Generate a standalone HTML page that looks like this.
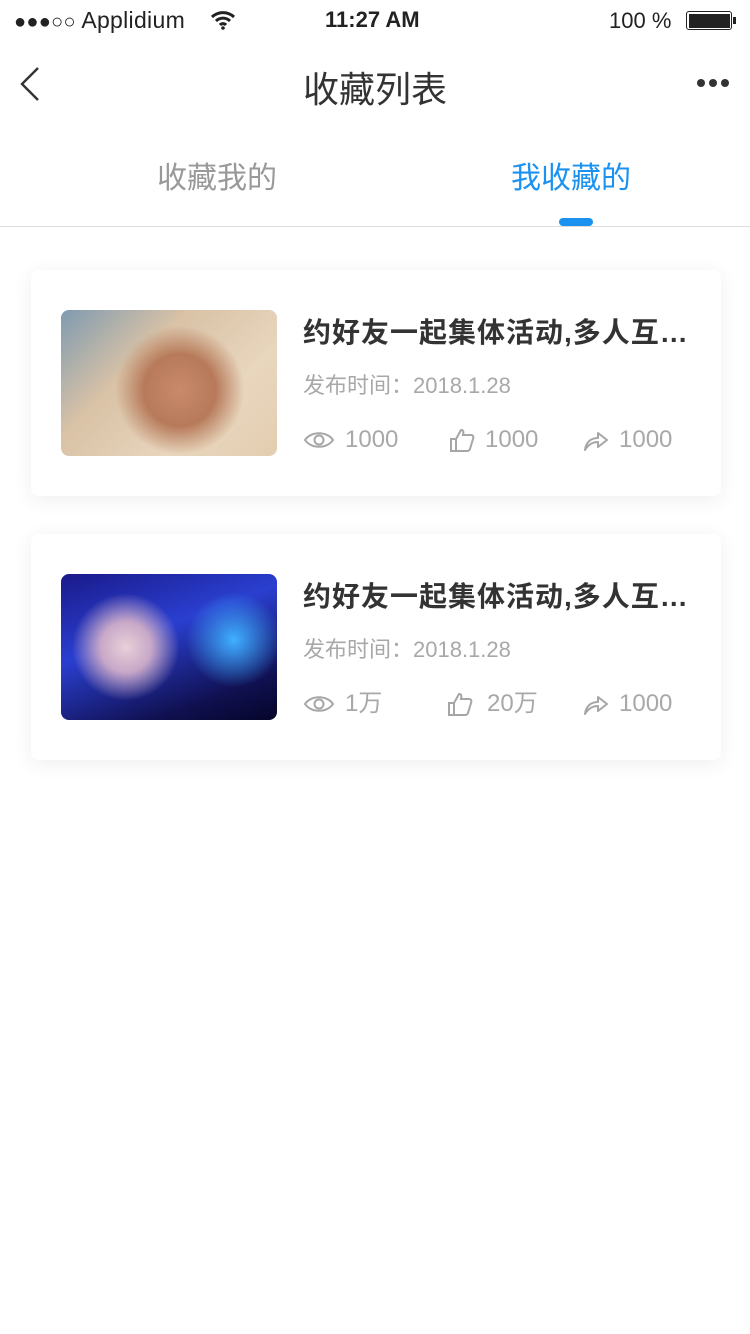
<!DOCTYPE html>
<html><head><meta charset="utf-8"><style>
*{margin:0;padding:0;box-sizing:border-box}
body{width:750px;height:1334px;background:#fff;font-family:"Liberation Sans","Noto Sans CJK SC",sans-serif;position:relative;overflow:hidden;color:#333}
.abs{position:absolute}
.card{position:absolute;left:31px;width:690px;height:226px;background:#fff;border-radius:8px;box-shadow:0 4px 20px rgba(0,0,0,0.07)}
.img{position:absolute;left:30px;top:40px;width:216px;height:146px;border-radius:8px;overflow:hidden}
.title{position:absolute;left:272px;top:43px;font-size:28px;line-height:40px;font-weight:bold;color:#333;white-space:nowrap;letter-spacing:1px}
.date{position:absolute;left:272px;top:98px;font-size:22px;color:#a8a8a8}
.stat{position:absolute;top:154px;height:32px;line-height:32px;font-size:24px;color:#a8a8a8;display:flex;align-items:center}
.stat svg{margin-right:10px}
</style></head><body>
<div class="abs" style="left:14px;top:7px;font-size:23px;color:#222;letter-spacing:0.3px"><span style="font-size:20px">●●●○○</span> Applidium</div>
<svg class="abs" style="left:210px;top:10px" width="26" height="20" viewBox="0 0 26 20"><path d="M2 7a16 16 0 0 1 22 0M6 11a10 10 0 0 1 14 0M10 15a4 4 0 0 1 6 0" stroke="#222" stroke-width="3" fill="none"/><circle cx="13" cy="18" r="1.8" fill="#222"/></svg>
<div class="abs" style="left:325px;top:7px;font-size:22px;font-weight:bold;color:#222">11:27 AM</div>
<div class="abs" style="left:609px;top:8px;font-size:22px;color:#222">100 %</div>
<div class="abs" style="left:686px;top:11px;width:46px;height:19px;border:1.5px solid #222;border-radius:3px;padding:1.5px"><div style="width:100%;height:100%;background:#222"></div></div>
<div class="abs" style="left:733px;top:17px;width:3px;height:7px;background:#222"></div>
<svg class="abs" style="left:18px;top:66px" width="24" height="36"><path d="M20 2L4 18l16 16" stroke="#333" stroke-width="2.4" fill="none"/></svg>
<div class="abs" style="left:0;width:750px;top:61px;text-align:center;font-size:36px;color:#333">收藏列表</div>
<div class="abs" style="left:697px;top:79px;display:flex;gap:4px"><i style="width:8px;height:8px;border-radius:50%;background:#333"></i><i style="width:8px;height:8px;border-radius:50%;background:#333"></i><i style="width:8px;height:8px;border-radius:50%;background:#333"></i></div>
<div class="abs" style="left:157px;top:153px;font-size:30px;color:#999">收藏我的</div>
<div class="abs" style="left:511px;top:153px;font-size:30px;color:#1b92f0">我收藏的</div>
<div class="abs" style="left:559px;top:218px;width:34px;height:8px;border-radius:4px;background:#1b92f0"></div>
<div class="abs" style="left:0;top:226px;width:750px;height:1px;background:#ddd"></div>

<div class="card" style="top:270px">
<div class="img" style="background:radial-gradient(circle at 55% 55%,#c88a6a 0,#b77a5a 25%,transparent 45%),linear-gradient(135deg,#7f9bb0 0,#d9c2a6 35%,#e8d6bd 70%,#e3cdb0 100%)"></div>
<div class="title">约好友一起集体活动,多人互…</div>
<div class="date">发布时间：2018.1.28</div>
<div class="stat" style="left:272px"><svg width="32" height="22" viewBox="0 0 32 22"><path d="M2 11C8 2 24 2 30 11C24 20 8 20 2 11Z" stroke="#a6a6a6" stroke-width="2" fill="none"/><circle cx="16" cy="11" r="4.5" stroke="#a6a6a6" stroke-width="2" fill="none"/></svg>1000</div>
<div class="stat" style="left:418px"><svg width="26" height="26" viewBox="0 0 26 26"><path d="M2 12h5v12H2zM7 12l5-9c2 0 3 1 2 5h8c2 0 3 2 2 4l-3 10c-1 2-2 2-3 2H7" stroke="#a6a6a6" stroke-width="2" fill="none"/></svg>1000</div>
<div class="stat" style="left:552px"><svg width="26" height="24" viewBox="0 0 26 24"><path d="M2 22C3 14 8 10 15 10V5l9 7-9 7v-5C9 14 5 17 2 22Z" stroke="#a6a6a6" stroke-width="2" fill="none" stroke-linejoin="round"/></svg>1000</div>
</div>

<div class="card" style="top:534px">
<div class="img" style="background:radial-gradient(circle at 30% 50%,#e8d0d8 0,#c8a8c8 15%,transparent 32%),radial-gradient(circle at 80% 45%,#3fb0ff 0,transparent 25%),linear-gradient(160deg,#1a1a8a 0,#2a3fd0 40%,#101050 80%,#05052a 100%)"></div>
<div class="title">约好友一起集体活动,多人互…</div>
<div class="date">发布时间：2018.1.28</div>
<div class="stat" style="left:272px"><svg width="32" height="22" viewBox="0 0 32 22"><path d="M2 11C8 2 24 2 30 11C24 20 8 20 2 11Z" stroke="#a6a6a6" stroke-width="2" fill="none"/><circle cx="16" cy="11" r="4.5" stroke="#a6a6a6" stroke-width="2" fill="none"/></svg>1万</div>
<div class="stat" style="left:416px"><svg width="26" height="26" viewBox="0 0 26 26" style="margin-right:14px"><path d="M2 12h5v12H2zM7 12l5-9c2 0 3 1 2 5h8c2 0 3 2 2 4l-3 10c-1 2-2 2-3 2H7" stroke="#a6a6a6" stroke-width="2" fill="none"/></svg>20万</div>
<div class="stat" style="left:552px"><svg width="26" height="24" viewBox="0 0 26 24"><path d="M2 22C3 14 8 10 15 10V5l9 7-9 7v-5C9 14 5 17 2 22Z" stroke="#a6a6a6" stroke-width="2" fill="none" stroke-linejoin="round"/></svg>1000</div>
</div>
</body></html>
